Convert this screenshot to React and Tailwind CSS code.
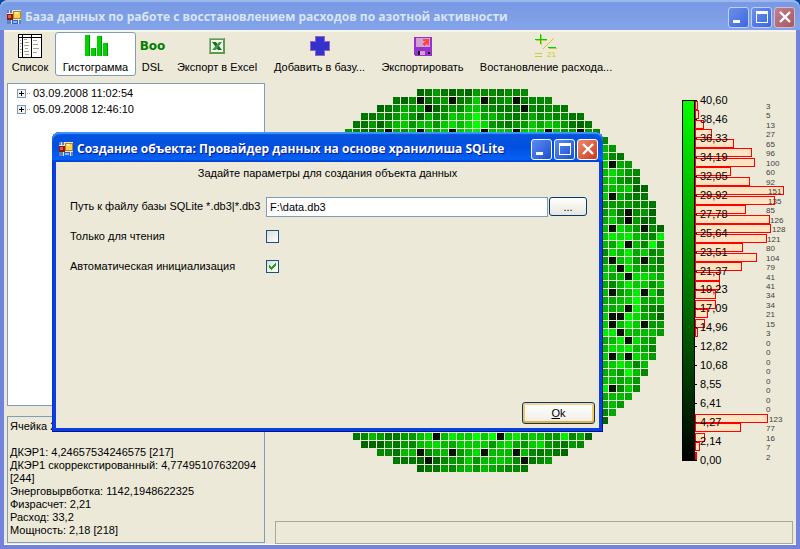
import React from 'react';

/* Reactor map: row, first column, then the green level of each cell as a hex digit. */
const MAP_ROWS = [
  [0, 17, '67976769887888'],
  [1, 14, '7681689178c178917888'],
  [2, 12, '678a9916898bc98777187887'],
  [3, 10, '77879b96a89cbcfab9878a898877'],
  [4, 9, '77969bc9bb9cdbdfd98799cacb9767'],
  [5, 8, '987681a9b1bac1cde1bcb1cdc1b99198'],
  [6, 40, '8'],
  [7, 40, 'b9'],
  [8, 40, 'b87'],
  [9, 40, 'c1a9'],
  [10, 40, 'bdb98'],
  [11, 40, 'bc987'],
  [12, 40, 'bbbc66'],
  [13, 40, 'c1a877'],
  [14, 40, '9999887'],
  [15, 40, '9b71896'],
  [16, 40, 'ac80967'],
  [17, 40, 'b1db9186'],
  [18, 40, 'cedeb98e'],
  [19, 40, 'bae1b8f8'],
  [20, 40, '8dbeac89'],
  [21, 40, '91bd9197'],
  [22, 40, 'bb1da998'],
  [23, 40, 'cab1ddca'],
  [24, 40, 'a8becc9b'],
  [25, 40, 'b19be1c7'],
  [26, 40, 'aabcfaab'],
  [27, 40, 'bab1e987'],
  [28, 40, 'c11eda96'],
  [29, 40, 'c1bec199'],
  [30, 40, 'ee1bbbb9'],
  [31, 40, 'abe1da9'],
  [32, 40, 'bddeba8'],
  [33, 40, 'c1b1db9'],
  [34, 40, 'bcec8b'],
  [35, 40, 'ab9fb8'],
  [36, 40, 'bbab9'],
  [37, 40, 'e18c8'],
  [38, 40, 'abba'],
  [39, 40, 'ab9'],
  [40, 40, '8a'],
  [41, 40, '6'],
  [43, 9, '78b97799bd1beccfcf1ceacb99e8a6'],
  [44, 10, '6668798bcdbacccc9cda9cd98798'],
  [45, 12, '887bb18ab19bd1bbb1b87876'],
  [46, 14, '777616899c9bbcb81789'],
  [47, 17, '67798ab9ba9887'],
];

const SCALE = ['40,60', '38,46', '36,33', '34,19', '32,05', '29,92', '27,78', '25,64', '23,51', '21,37', '19,23', '17,09', '14,96', '12,82', '10,68', '8,55', '6,41', '4,27', '2,14', '0,00'];

const COUNTS = [3, 5, 13, 27, 65, 96, 100, 60, 92, 151, 135, 85, 126, 128, 121, 80, 104, 79, 41, 41, 34, 34, 21, 15, 3, 0, 0, 0, 0, 0, 0, 0, 0, 123, 77, 16, 7, 2];

const TREE = ['03.09.2008 11:02:54', '05.09.2008 12:46:10'];

const INFO = [
  'ДКЭР1: 4,24657534246575 [217]',
  'ДКЭР1 скоррекстированный: 4,77495107632094 [244]',
  'Энерговырвботка: 1142,1948622325',
  'Физрасчет: 2,21',
  'Расход: 33,2',
  'Мощность: 2,18 [218]',
];

function CoreMap() {
  return (
    <svg width="384" height="384" viewBox="0 0 384 384" shapeRendering="crispEdges" className="shrink-0" role="img" aria-label="Гистограмма">
      {MAP_ROWS.map(([row, col, levels]) =>
        levels.split('').map((d, i) => (
          <rect
            key={row + '-' + i}
            x={(col + i) * 8}
            y={row * 8}
            width="7"
            height="7"
            fill={`rgb(0,${parseInt(d, 16) * 17},0)`}
          />
        )),
      )}
    </svg>
  );
}

function Distribution() {
  const step = 360 / 38;
  return (
    <svg width="110" height="376" viewBox="0 0 110 376" className="shrink-0" fontFamily='"Liberation Sans", Arial, sans-serif'>
      <defs>
        <linearGradient id="level" x1="0" y1="0" x2="0" y2="1">
          <stop offset="0" stopColor="#00ff00" />
          <stop offset="1" stopColor="#000000" />
        </linearGradient>
      </defs>
      <g shapeRendering="crispEdges">
        {COUNTS.map((n, i) =>
          n > 0 ? (
            <rect key={i} x="15.5" y={Math.round(8 + i * step) + 0.5} width={Math.max(1, Math.round(n * 0.585))} height="8" fill="#ffe4c4" stroke="#ff0000" />
          ) : null,
        )}
        <rect x="2.5" y="7.5" width="12" height="360" fill="url(#level)" stroke="#000" />
        {SCALE.map((s, i) => (
          <rect key={s} x="15" y={Math.round(7 + (i * 360) / 19)} width="2" height="1" />
        ))}
      </g>
      <g fontSize="11" fill="#000">
        {SCALE.map((s, i) => (
          <text key={s} x="20" y={Math.round(11 + (i * 360) / 19)}>{s}</text>
        ))}
      </g>
      <g fontSize="8" fill="#404040">
        {COUNTS.map((n, i) => {
          const end = 16 + n * 0.59;
          return (
            <text key={i} x={end > 93 ? 88 : Math.max(86, Math.round(end))} y={Math.round(16 + i * step)}>{n}</text>
          );
        })}
      </g>
    </svg>
  );
}

function FormIcon() {
  return (
    <svg width="14" height="14" viewBox="0 0 14 14" shapeRendering="crispEdges" className="shrink-0">
      <path d="M0 0h14v14H0z" fill="#dfe3ee" />
      <path d="M0 0h2v3H0zM3 0h2v3H3zM0 10h4v4H0zM12 10h2v4h-2z" fill="#5c7fc8" />
      <path d="M0 4h6v6H0z" fill="#8c1a0c" />
      <path d="M1 5h3v3H1z" fill="#e85c38" />
      <path d="M6 1h8v8H6z" fill="#b8860b" />
      <path d="M7 2h6v6H7z" fill="#ffd24a" />
      <path d="M8 2h3v2H8z" fill="#fff3b0" />
      <path d="M5 10h6v4H5z" fill="#2f62c8" />
      <path d="M6 11h4v2H6z" fill="#8db4f4" />
    </svg>
  );
}

function ListIcon() {
  return (
    <svg width="24" height="24" viewBox="0 0 24 24" shapeRendering="crispEdges">
      <path d="M.5.5h23v23H.5zM4.5 0v24M13.5 0v24M0 3.500h24" fill="#fff" stroke="#000" />
      <path d="M2 6.500h1M2 9.500h2M2 12.500h1M2 15.500h2M2 18.500h1M6 5.500h3M7 8.500h4M6 11.500h5M7 14.500h3M6 17.500h5M7 20.500h4M15 6.500h4M15 10.500h5M15 14.500h6M15 18.500h4" stroke="#a8a48c" />
    </svg>
  );
}

function BarsIcon() {
  return (
    <svg width="24" height="24" viewBox="0 0 24 24" shapeRendering="crispEdges">
      <path d="M1 1h5v21H1zM7 14h5v8H7zM13 2h5v20h-5zM19 9h5v13h-5z" fill="#009600" />
      <path d="M1 1h4v21H1zM7 14h4v8H7zM13 2h4v20h-4zM19 9h4v13h-4z" fill="#00d200" />
    </svg>
  );
}

function ExcelIcon() {
  return (
    <svg width="16" height="16" viewBox="0 0 16 16" shapeRendering="crispEdges">
      <path d="M0 0h16v16H0z" fill="#5c9c50" />
      <path d="M0 15V0h15" fill="none" stroke="#94b88c" strokeWidth="2" />
      <path d="M2 2h12v12H2z" fill="#f4f8ee" />
      <g shapeRendering="auto">
        <path d="M3 4h4l6 8H9z" fill="#1c6c24" />
        <path d="M13 4h-3l-7 8h4z" fill="#3c9c44" />
      </g>
    </svg>
  );
}

function PlusIcon() {
  return (
    <svg width="20" height="20" viewBox="0 0 20 20" shapeRendering="crispEdges">
      <path d="M5.500.5h9v5h5v9h-5v5h-9v-5h-5v-9h5z" fill="#3232cd" stroke="#9664c8" />
    </svg>
  );
}

function FloppyIcon() {
  return (
    <svg width="18" height="19" viewBox="0 0 18 19" shapeRendering="crispEdges">
      <path d="M0 0h18v19H1l-1-1z" fill="#9932cc" />
      <path d="M2 1h14v9H2z" fill="#d2a0d2" />
      <path d="M4 14h7v4H4z" fill="#d2a0d2" />
      <path d="M4 14h2v4H4zM14 15h2v2h-2z" fill="#000" />
      <path d="M9 2h6v6h-2V6l-3 3-2-2 3-3H9z" fill="#ff4646" />
    </svg>
  );
}

function CalcIcon() {
  return (
    <svg width="22" height="24" viewBox="0 0 22 24" fontFamily='"Liberation Sans", Arial, sans-serif'>
      <path d="M8 15 19 4" stroke="#d2c832" />
      <g shapeRendering="crispEdges">
        <path d="M1 6h11v1H1zM6 1h1v10H6zM14 14h8v1h-8zM0 19h7v1H0zM0 22h7v1H0z" fill="#d2c832" />
        <path d="M0 5h12v1H0zM5 0h1v10H5zM13 13h8v1h-8z" fill="#00d200" />
      </g>
      <text x="12" y="23" fontSize="8" fill="#c8c828">21</text>
    </svg>
  );
}

const CAPTION_BUTTONS = {
  min: <path d="M4 13h7v3H4z" fill="#fff" />,
  max: <path d="M4 4h12v12H4zM5 7v8h10V7z" fill="#fff" fillRule="evenodd" />,
  close: <path d="m5 5 10 10M15 5 5 15" stroke="#fff" strokeWidth="2.400" shapeRendering="auto" />,
};

function CaptionButton({ kind, label, tone }) {
  return (
    <button type="button" aria-label={label} className={'flex size-[21px] items-center justify-center rounded-[3px] border ' + tone}>
      <svg width="20" height="20" viewBox="0 0 20 20" shapeRendering="crispEdges" className="shrink-0">
        {CAPTION_BUTTONS[kind]}
      </svg>
    </button>
  );
}

function ToolButton({ icon, label, width, active }) {
  return (
    <button
      type="button"
      className={
        'flex h-11 shrink-0 flex-col items-center justify-between rounded-[3px] border text-[11px] leading-4 whitespace-nowrap ' +
        width +
        (active ? ' border-[#7f9db9] bg-white' : ' border-transparent')
      }
    >
      <span className="flex h-7 items-center justify-center">{icon}</span>
      {label}
    </button>
  );
}

function Check({ id, defaultChecked }) {
  return (
    <span className="grid size-[13px]">
      <input
        id={id}
        type="checkbox"
        defaultChecked={defaultChecked}
        className="peer col-start-1 row-start-1 size-[13px] appearance-none border border-[#1c5180] bg-linear-to-br from-[#dcdcd7] to-white"
      />
      <svg viewBox="0 0 13 13" shapeRendering="crispEdges" className="pointer-events-none invisible col-start-1 row-start-1 size-[13px] peer-checked:visible">
        <path d="M3 5h1v1h1v1h1V6h1V5h1V4h1V3h1v3H9v1H8v1H7v1H6v1H5V9H4V8H3z" fill="#21a121" />
      </svg>
    </span>
  );
}

function Dialog() {
  return (
    <section
      role="dialog"
      aria-label="Создание объекта"
      className="absolute top-[132px] left-[52px] flex h-[300px] w-[551px] flex-col rounded-t-lg bg-[#0a3fe0] px-1 pb-1 shadow-[inset_-1px_-1px_0_#00138c,inset_1px_0_0_#0831d9]"
    >
      <header className="-mx-1 flex h-[30px] shrink-0 items-center gap-1 rounded-t-lg bg-linear-to-b from-[#0855dd] via-[#0050e0] to-[#0a63fa] pt-1 pr-[5px] pl-[7px] shadow-[inset_0_2px_1px_#3c96ff,inset_0_-2px_1px_#0046d5]">
        <FormIcon />
        <h2 className="flex-1 text-[12px] font-bold whitespace-nowrap text-white [font-family:'Open_Sans',sans-serif] [text-shadow:1px_1px_#0a1883]">
          Создание объекта: Провайдер данных на основе хранилиша SQLite
        </h2>
        <div className="flex gap-[2px]">
          <CaptionButton kind="min" label="Свернуть" tone="border-white bg-linear-to-br from-[#5a8cf4] to-[#1c4fd0]" />
          <CaptionButton kind="max" label="Развернуть" tone="border-white bg-linear-to-br from-[#5a8cf4] to-[#1c4fd0]" />
          <CaptionButton kind="close" label="Закрыть" tone="border-white bg-linear-to-br from-[#f08a68] to-[#c8371c]" />
        </div>
      </header>
      <form className="flex flex-1 flex-col bg-[#ece9d8] pt-[3px] pr-1 pb-1 pl-[14px]" onSubmit={(e) => e.preventDefault()}>
        <p className="pr-2.5 text-center leading-4">Задайте параметры для создания объекта данных</p>
        <div className="mt-3 grid grid-cols-[196px_1fr] items-center gap-y-[3px]">
          <label htmlFor="path">Путь к файлу базы SQLite *.db3|*.db3</label>
          <div className="flex h-[27px] items-center gap-px pr-2">
            <input id="path" type="text" defaultValue="F:\data.db3" className="h-5 min-w-0 flex-1 border border-[#7f9db9] bg-white px-[3px] text-[11px] outline-none" />
            <button type="button" className="h-[19px] w-[38px] rounded-[3px] border border-[#003c74] bg-linear-to-b from-white to-[#e8e6dc] leading-4">...</button>
          </div>
          <label htmlFor="readonly">Только для чтения</label>
          <div className="flex h-[27px] items-center">
            <Check id="readonly" />
          </div>
          <label htmlFor="autoinit">Автоматическая инициализация</label>
          <div className="flex h-[27px] items-center">
            <Check id="autoinit" defaultChecked />
          </div>
        </div>
        <button
          type="submit"
          className="mt-auto h-[22px] w-[73px] self-end rounded-[3px] border border-[#003c74] bg-linear-to-b from-white to-[#efeee8] text-[11px] leading-4 shadow-[inset_0_-2px_0_#f0ac30,inset_0_2px_0_#fcd28a,inset_2px_0_0_#fac660,inset_-2px_0_0_#fac660]"
        >
          <u>O</u>k
        </button>
      </form>
    </section>
  );
}

export default function App() {
  return (
    <div className="relative flex h-screen flex-col overflow-hidden bg-[#00489c] text-[11px] text-black [font-family:'Liberation_Sans',Arial,sans-serif]">
      <div className="flex min-h-0 flex-1 flex-col rounded-t-lg bg-[#7183dd] px-1 pb-1">
        <header className="-mx-1 flex h-[30px] shrink-0 items-center gap-1 rounded-t-lg bg-linear-to-b from-[#7697e7] via-[#7e9ee3] to-[#83a3ec] pt-1 pr-[5px] pl-[7px] shadow-[inset_0_2px_1px_#9db9eb]">
          <FormIcon />
          <h1 className="flex-1 text-[12px] font-bold whitespace-nowrap text-[#d8e4f8] [font-family:'Open_Sans',sans-serif]">
            База данных по работе с восстановлением расходов по азотной активности
          </h1>
          <div className="flex gap-[2px]">
            <CaptionButton kind="min" label="Свернуть" tone="border-[#c0d0f4] bg-linear-to-br from-[#6c90e8] to-[#3c66e0]" />
            <CaptionButton kind="max" label="Развернуть" tone="border-[#c0d0f4] bg-linear-to-br from-[#6c90e8] to-[#3c66e0]" />
            <CaptionButton kind="close" label="Закрыть" tone="border-[#dcb8c4] bg-linear-to-br from-[#c08090] to-[#a85860]" />
          </div>
        </header>
        <main className="flex min-h-0 flex-1 flex-col border-t-2 border-b border-white border-t-[#f6f4ec] bg-[#ece9d8]">
          <nav className="flex shrink-0 pl-px" aria-label="Панель инструментов">
            <ToolButton icon={<ListIcon />} label="Список" width="w-[50px]" />
            <ToolButton icon={<BarsIcon />} label="Гистограмма" width="w-[81px]" active />
            <ToolButton icon={<b className="text-[12px] text-[#008000] [font-family:'DejaVu_Sans',sans-serif]">Boo</b>} label="DSL" width="w-[33px]" />
            <ToolButton icon={<ExcelIcon />} label="Экспорт в Excel" width="w-[96px]" />
            <ToolButton icon={<PlusIcon />} label="Добавить в базу..." width="w-[109px]" />
            <ToolButton icon={<FloppyIcon />} label="Экспортировать" width="w-[97px]" />
            <ToolButton icon={<CalcIcon />} label="Востановление расхода..." width="w-[150px]" />
          </nav>
          <div className="flex min-h-0 flex-1 gap-2.5 pt-[7px] pr-[3px] pl-[3px]">
            <aside className="flex w-[258px] shrink-0 flex-col gap-2.5">
              <ul className="flex-1 border border-[#7f9db9] bg-white pt-px pl-[9px] leading-4">
                {TREE.map((t) => (
                  <li key={t} className="flex items-center">
                    <svg width="16" height="16" viewBox="0 0 16 16" shapeRendering="crispEdges">
                      <path d="M.5 4.500h8v8h-8z" fill="#f4f2ea" stroke="#7b9ab8" />
                      <path d="M2 8.500h5M4.500 6v5" stroke="#000" />
                      <path d="M10 8.500h4" stroke="#a0a090" strokeDasharray="1 1" />
                    </svg>
                    {t}
                  </li>
                ))}
              </ul>
              <div className="mb-px h-[127px] shrink-0 border border-[#7f9db9] pt-[3px] pl-[2px] leading-[13px]">
                <p className="mb-[13px] whitespace-nowrap">Ячейка 22-20</p>
                {INFO.map((line) => (
                  <p key={line}>{line}</p>
                ))}
              </div>
            </aside>
            <div className="flex min-w-0 flex-1 flex-col">
              <div className="flex min-h-0 flex-1 justify-between pt-1.5 pr-[3px] pl-1.5">
                <CoreMap />
                <div className="pt-1">
                  <Distribution />
                </div>
              </div>
              <div className="h-[23px] shrink-0 border border-[#aca899]" />
            </div>
          </div>
        </main>
      </div>
      <Dialog />
    </div>
  );
}
